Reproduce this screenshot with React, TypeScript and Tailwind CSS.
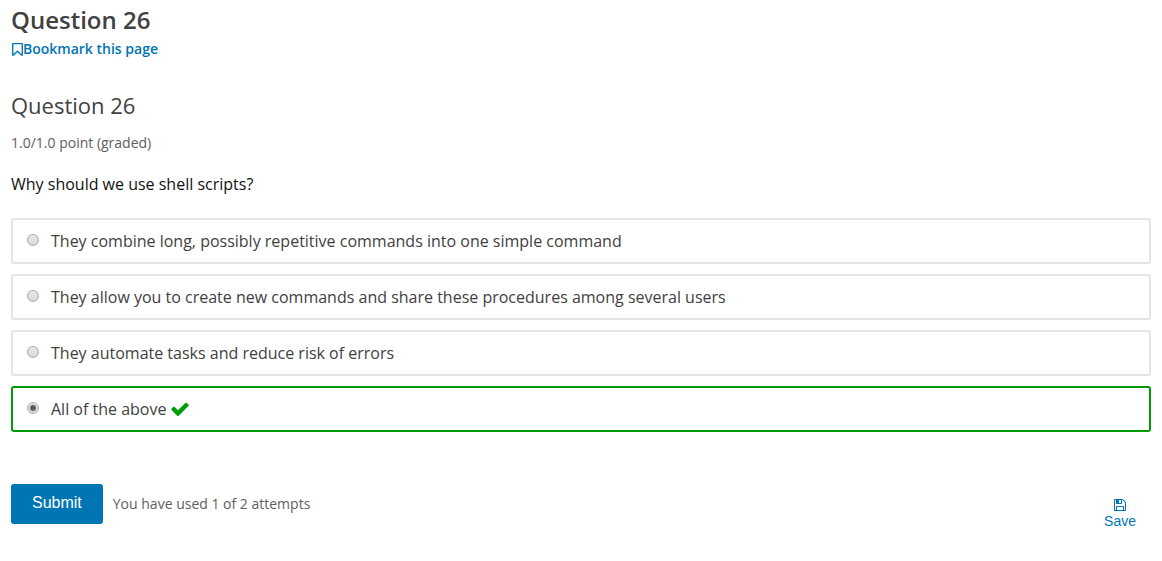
import { useState } from "react";

const options = [
  "They combine long, possibly repetitive commands into one simple command",
  "They allow you to create new commands and share these procedures among several users",
  "They automate tasks and reduce risk of errors",
  "All of the above",
];

const correctIndex = 3;

function BookmarkIcon() {
  return (
    <svg
      viewBox="256 128 1280 1536"
      className="h-[13px] w-[11px]"
      fill="currentColor"
      stroke="currentColor"
      strokeWidth="50"
      aria-hidden="true"
    >
      <path d="M1408 256h-1024v1242l423-406 89-85 89 85 423 406v-1242zm12-128q23 0 44 9 33 13 52.5 41t19.5 62v1289q0 34-19.5 62t-52.5 41q-19 8-44 8-48 0-83-32l-441-424-441 424q-36 33-83 33-23 0-44-9-33-13-52.5-41t-19.5-62v-1289q0-34 19.5-62t52.5-41q21-9 44-9h1048z" />
    </svg>
  );
}

function CheckIcon() {
  return (
    <svg viewBox="0 0 1792 1792" className="size-5 text-[#009b00]" fill="currentColor" role="img" aria-label="correct">
      <path d="M1671 566q0 40-28 68l-724 724-136 136q-28 28-68 28t-68-28l-136-136-362-362q-28-28-28-68t28-68l136-136q28-28 68-28t68 28l294 295 656-657q28-28 68-28t68 28l136 136q28 28 28 68z" />
    </svg>
  );
}

function SaveIcon() {
  return (
    <svg viewBox="128 128 1536 1536" className="size-3" fill="currentColor" aria-hidden="true">
      <path d="M512 1536h768v-384h-768v384zm896 0h128v-896q0-14-10-38.5t-20-34.5l-281-281q-10-10-34-20t-39-10v416q0 40-28 68t-68 28h-576q-40 0-68-28t-28-68v-416h-128v1280h128v-416q0-40 28-68t68-28h832q40 0 68 28t28 68v416zm-384-928v-320q0-13-9.5-22.5t-22.5-9.5h-192q-13 0-22.5 9.5t-9.5 22.5v320q0 13 9.5 22.5t22.5 9.5h192q13 0 22.5-9.5t9.5-22.5zm640 32v928q0 40-28 68t-68 28h-1344q-40 0-68-28t-28-68v-1344q0-40 28-68t68-28h928q40 0 88 20t76 48l280 280q28 28 48 76t20 88z" />
    </svg>
  );
}

export default function App() {
  const [selected, setSelected] = useState(correctIndex);

  return (
    <main className="bg-white px-[11px] pt-1 font-['Open_Sans',sans-serif] text-[#414141]">
      <h1 className="text-2xl leading-8 font-semibold">Question 26</h1>
      <button type="button" className="mt-[3px] flex items-center pl-px text-sm leading-5 font-semibold text-[#0075b4]">
        <BookmarkIcon />
        Bookmark this page
      </button>

      <h2 className="mt-[30px] text-[22px] leading-8">Question 26</h2>
      <p className="mt-3 text-sm leading-5 text-[#5e5e5e]">1.0/1.0 point (graded)</p>

      <form onSubmit={(event) => event.preventDefault()}>
        <fieldset>
          <legend className="pt-[19px] text-base leading-6 text-[#111111]">Why should we use shell scripts?</legend>
          <div className="mt-[22px] flex flex-col gap-2.5">
            {options.map((option, index) => (
              <label
                key={option}
                className={`flex items-center rounded-[3px] border-2 px-3.5 py-2.5 leading-[22px] ${
                  selected === index && index === correctIndex ? "border-[#009b00]" : "border-[#e4e4e4]"
                }`}
              >
                <input
                  type="radio"
                  name="answer"
                  checked={selected === index}
                  onChange={() => setSelected(index)}
                  className="mr-3 mb-0.5 size-3 shrink-0 appearance-none rounded-full border border-[#acacac] bg-linear-to-b from-[#e8e8e8] to-[#d8d8d8] checked:bg-[radial-gradient(circle,#555555_0,#555555_2px,#e4e4e4_4px)]"
                />
                <span>{option}</span>
                {selected === index && index === correctIndex && (
                  <span className="ml-1">
                    <CheckIcon />
                  </span>
                )}
              </label>
            ))}
          </div>
        </fieldset>

        <div className="mt-[52px] flex items-start">
          <button
            type="submit"
            className="h-10 rounded-[3px] bg-[#0075b4] px-[21px] pb-0.5 font-['Liberation_Sans',Arial,sans-serif] text-base text-white"
          >
            Submit
          </button>
          <p className="ml-2.5 text-sm leading-10 text-[#5e5e5e]">You have used 1 of 2 attempts</p>
          <button
            type="button"
            className="mt-[15px] mr-[15px] ml-auto flex flex-col items-center font-['Liberation_Sans',Arial,sans-serif] text-sm leading-5 text-[#0075b4]"
          >
            <SaveIcon />
            Save
          </button>
        </div>
      </form>
    </main>
  );
}
